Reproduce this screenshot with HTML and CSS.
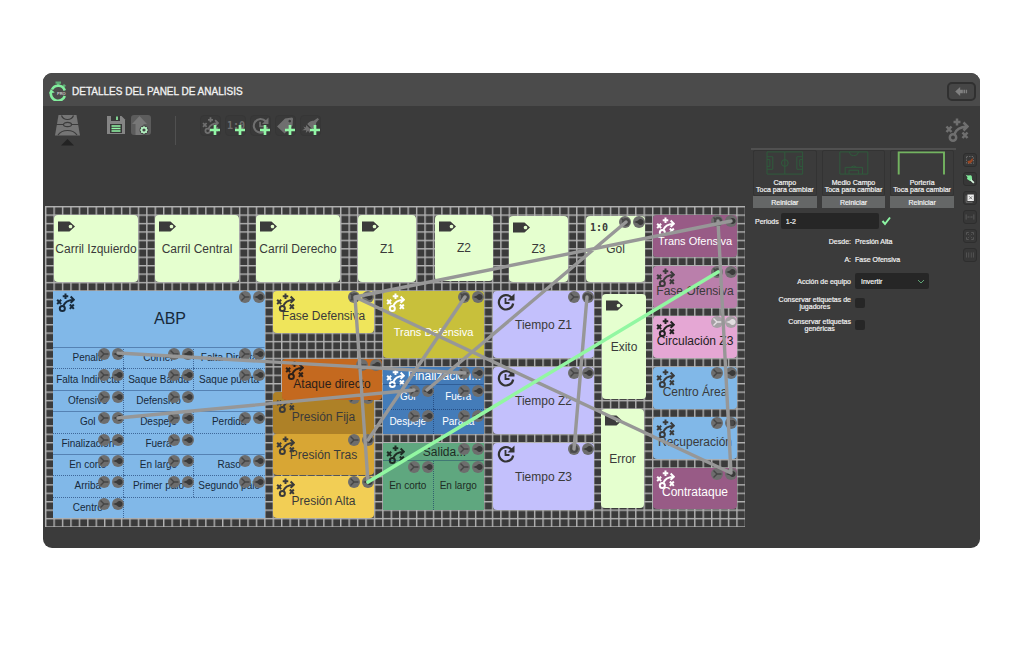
FILE: index.html
```html
<!DOCTYPE html>
<html lang="es">
<head>
<meta charset="utf-8">
<meta name="viewport" content="width=device-width, initial-scale=1">
<title>Detalles del panel de analisis</title>
<link rel="stylesheet" href="styles.css">
</head>
<body>
<svg class="defs" aria-hidden="true">
  <symbol id="tactic" viewBox="0 0 24 24">
    <g fill="none" stroke="currentColor" stroke-width="2.500">
      <path d="M1.500 8.500l5 5.500M6.500 8.500l-5 5.500M8.500 4h7M12 .5v7M17.500 14.500l5 5.500M22.500 14.500l-5 5.500"/>
      <circle cx="8" cy="19.500" r="3.200"/>
      <path d="M9.500 16C11 11.500 15 9 22 8.500M18.500 4.500l4 4-4 4"/>
    </g>
  </symbol>
  <symbol id="tag" viewBox="0 0 17 11">
    <path fill="currentColor" fill-rule="evenodd" d="M0 .5h11.500L17 5.500l-5.500 5H0zM12.500 3.700a1.800 1.800 0 1 0 .01 0z"/>
  </symbol>
  <symbol id="clock" viewBox="0 0 18 18">
    <path d="M14.500 4.500A7.200 7.200 0 1 0 16.200 10.500" fill="none" stroke="currentColor" stroke-width="2.200"/>
    <path d="M17.500 .5v7h-7z" fill="currentColor"/>
    <path d="M8.500 5v5h4" fill="none" stroke="currentColor" stroke-width="1.800"/>
  </symbol>
  <symbol id="plus" viewBox="0 0 9 9"><path d="M4.500 0v9M0 4.500h9" stroke="#92f7a6" stroke-width="2.400"/></symbol>
  <symbol id="ports" viewBox="0 0 26 12">
    <circle cx="6" cy="6" r="6" fill="#6d6d6d"/>
    <path d="M2.500 2.500L6 6l-3.500 3.500M6 6h4.500" fill="none" stroke="#454545" stroke-width="1.400"/>
    <circle cx="20" cy="6" r="6" fill="#6d6d6d"/>
    <path d="M15 6l4-1.500a3 3 0 1 1 0 3z" fill="#3a3a3a"/>
  </symbol>
  <symbol id="ports-lit" viewBox="0 0 26 12">
    <circle cx="6" cy="6" r="6" fill="#a5a0a4"/>
    <path d="M2.500 2.500L6 6l-3.500 3.500M6 6h4.500" fill="none" stroke="#e6e0e4" stroke-width="1.400"/>
    <circle cx="20" cy="6" r="6" fill="#a5a0a4"/>
    <path d="M15 6l4-1.500a3 3 0 1 1 0 3z" fill="#e2dde0"/>
  </symbol>
</svg>

<main class="panel">
  <header class="titlebar">
    <svg class="logo" viewBox="0 0 18 20" aria-hidden="true">
      <path d="M6.500 .5h5.500v2.200h-1.500v2h-2.500v-2H6.500zM15 3l2 1.800-1.400 1.400-2-1.800z" fill="#5fae76"/>
      <path d="M3 8.500A7 7 0 0 1 15.800 9.500M15.800 15A7.200 7.200 0 0 1 2 11" fill="none" stroke="#82ee9d" stroke-width="2.600"/>
      <path d="M0 12.500L1.800 8l3.900 3.500z" fill="#82ee9d"/>
      <text x="8" y="14" class="logo-text">PRO</text>
    </svg>
    <h1 class="title">DETALLES DEL PANEL DE ANALISIS</h1>
    <button class="back" aria-label="Volver">
      <svg viewBox="0 0 14 10" aria-hidden="true"><path d="M0 5l5.500-5v3h3v4h-3v3zM9.200 3h1.800v4H9.200zM11.800 3h1.400v4h-1.400z" fill="#808080"/></svg>
    </button>
  </header>

  <nav class="toolbar" aria-label="Herramientas">
    <button class="tool tool-field" aria-label="Campo">
      <svg viewBox="0 0 25 31" aria-hidden="true">
        <path d="M3.500 0h18L25 20.500H0z" fill="#757575"/>
        <path d="M6.500 .5Q8 4.500 12.500 4.500t6-4M1 9.500h7.500M16.500 9.500H24M3 20q3-4.500 9.500-4.500T22 20" fill="none" stroke="#3b3b3b" stroke-width="1.200"/>
        <ellipse cx="12.500" cy="9.500" rx="4" ry="2.200" fill="none" stroke="#3b3b3b" stroke-width="1.200"/>
        <path d="M6 30.500l6.500-6.500 6.500 6.500z" fill="#232323"/>
      </svg>
    </button>
    <button class="tool" aria-label="Guardar">
      <svg viewBox="0 0 20 20" aria-hidden="true">
        <path d="M1 1h14.500L19 4.500V19H1z" fill="#858585"/><path d="M5 1h9v5H5zM4 9h12v9H4z" fill="#373737"/>
        <path d="M11 1.500v3.500M5.500 11h9M5.500 13.500h9M5.500 16h9" stroke="#92f7a6" stroke-width="1.600"/>
      </svg>
    </button>
    <button class="tool" aria-label="Exportar">
      <svg viewBox="0 0 20 20" aria-hidden="true">
        <rect width="20" height="20" rx="3" fill="#5c5c5c"/><path d="M8.500 1L16 9h-3.500v11h-8V9H1z" fill="#777"/>
        <circle cx="13" cy="15" r="4.500" fill="#454545"/><circle cx="13" cy="15" r="2.400" fill="none" stroke="#b4f3c2" stroke-width="1.600"/>
        <path d="M13 11v1.500M13 17.500V19M9 15h1.500M15.500 15H17M10.200 12.200l1 1M14.800 16.800l1 1M15.800 12.200l-1 1M11.200 16.800l-1 1" stroke="#b4f3c2"/>
      </svg>
    </button>
    <span class="divider"></span>
    <span class="adders">
      <button class="add" aria-label="Añadir equipo"><svg class="glyph" aria-hidden="true"><use href="#tactic"/></svg><svg class="plus" aria-hidden="true"><use href="#plus"/></svg></button>
      <button class="add" aria-label="Añadir marcador"><span class="score">1:0</span><svg class="plus" aria-hidden="true"><use href="#plus"/></svg></button>
      <button class="add" aria-label="Añadir tiempo"><svg class="glyph" aria-hidden="true"><use href="#clock"/></svg><svg class="plus" aria-hidden="true"><use href="#plus"/></svg></button>
      <button class="add" aria-label="Añadir etiqueta"><svg class="glyph" viewBox="0 0 18 18" aria-hidden="true"><path fill="currentColor" fill-rule="evenodd" d="M0 10L8.500 1.500 16 .5l1 1-.5 7.500L8 17.500zM13.500 3a1.400 1.400 0 1 0 .01 0z"/></svg><svg class="plus" aria-hidden="true"><use href="#plus"/></svg></button>
      <button class="add" aria-label="Añadir conexión"><svg class="glyph" viewBox="0 0 18 18" aria-hidden="true"><path fill="currentColor" d="M16.500 1l1.500 1.500-3 3.500q.5 3-2 5l-2 2-5.500-5.500 2-2q2-2 5-1.500zM4.500 8.500l5.500 5.500-2 3-1.500-2.500L4 17l.5-3L0 14l3-1.500L1.500 10l2.500 1z"/></svg><svg class="plus" aria-hidden="true"><use href="#plus"/></svg></button>
    </span>
    <svg class="mode" aria-hidden="true"><use href="#tactic"/></svg>
  </nav>

  <div class="content">
    <section class="board" aria-label="Panel">
      <svg class="layer" viewBox="0 0 701 321" preserveAspectRatio="none" aria-hidden="true">
        <defs><pattern id="grid" width="8.430" height="8.430" patternUnits="userSpaceOnUse"><path d="M.7 0v8.430M0 .7h8.430" stroke="#b2b2b2" stroke-width="1.400"/></pattern></defs>
        <rect width="700" height="321.500" fill="url(#grid)"/>
      </svg>

      <div class="node lime" style="--x:9;--y:9;--w:84;--h:67"><svg class="icon tag"><use href="#tag"/></svg><span>Carril Izquierdo</span></div>
      <div class="node lime" style="--x:110;--y:9;--w:84;--h:67"><svg class="icon tag"><use href="#tag"/></svg><span>Carril Central</span></div>
      <div class="node lime" style="--x:211;--y:9;--w:84;--h:67"><svg class="icon tag"><use href="#tag"/></svg><span>Carril Derecho</span></div>
      <div class="node lime" style="--x:313;--y:9;--w:58;--h:67"><svg class="icon tag"><use href="#tag"/></svg><span>Z1</span></div>
      <div class="node lime" style="--x:390;--y:9;--w:58;--h:66"><svg class="icon tag"><use href="#tag"/></svg><span>Z2</span></div>
      <div class="node lime" style="--x:464;--y:10;--w:59;--h:66"><svg class="icon tag"><use href="#tag"/></svg><span>Z3</span></div>
      <div class="node lime" style="--x:541;--y:10;--w:59;--h:66"><span class="icon goal">1:0</span><span>Gol</span><svg class="ports"><use href="#ports"/></svg></div>

      <div class="node group blue" style="--x:8;--y:85;--w:212;--h:227">
        <div class="group-head big"><svg class="icon tactic"><use href="#tactic"/></svg><span>ABP</span><svg class="ports"><use href="#ports"/></svg></div>
        <div class="cells three">
          <div class="cell">Penalti<svg class="ports"><use href="#ports"/></svg></div>
          <div class="cell">Corner<svg class="ports"><use href="#ports"/></svg></div>
          <div class="cell">Falta Directa<svg class="ports"><use href="#ports"/></svg></div>
          <div class="cell dotted">Falta Indirecta<svg class="ports"><use href="#ports"/></svg></div>
          <div class="cell dotted">Saque Banda<svg class="ports"><use href="#ports"/></svg></div>
          <div class="cell dotted">Saque puerta<svg class="ports"><use href="#ports"/></svg></div>
          <div class="cell">Ofensivo<svg class="ports"><use href="#ports"/></svg></div>
          <div class="cell open">Defensivo<svg class="ports"><use href="#ports"/></svg></div>
          <div class="cell"></div>
          <div class="cell">Gol<svg class="ports"><use href="#ports"/></svg></div>
          <div class="cell">Despeje<svg class="ports"><use href="#ports"/></svg></div>
          <div class="cell">Perdida<svg class="ports"><use href="#ports"/></svg></div>
          <div class="cell dotted">Finalización<svg class="ports"><use href="#ports"/></svg></div>
          <div class="cell dotted open">Fuera<svg class="ports"><use href="#ports"/></svg></div>
          <div class="cell dotted"></div>
          <div class="cell">En corto<svg class="ports"><use href="#ports"/></svg></div>
          <div class="cell">En largo<svg class="ports"><use href="#ports"/></svg></div>
          <div class="cell">Raso<svg class="ports"><use href="#ports"/></svg></div>
          <div class="cell dotted">Arriba<svg class="ports"><use href="#ports"/></svg></div>
          <div class="cell dotted">Primer palo<svg class="ports"><use href="#ports"/></svg></div>
          <div class="cell dotted">Segundo palo<svg class="ports"><use href="#ports"/></svg></div>
          <div class="cell dotted">Centro<svg class="ports"><use href="#ports"/></svg></div>
          <div class="cell dotted open"></div>
          <div class="cell dotted"></div>
        </div>
      </div>

      <div class="node team yellow" style="--x:228;--y:85;--w:101;--h:42"><svg class="icon tactic"><use href="#tactic"/></svg><span>Fase Defensiva</span><svg class="ports"><use href="#ports"/></svg></div>
      <div class="node team small olive" style="--x:338;--y:85;--w:101;--h:67"><svg class="icon tactic"><use href="#tactic"/></svg><span>Trans Defensiva</span><svg class="ports"><use href="#ports"/></svg></div>
      <div class="node team ochre" style="--x:228;--y:186;--w:101;--h:42"><svg class="icon tactic"><use href="#tactic"/></svg><span>Presión Fija</span><svg class="ports"><use href="#ports"/></svg></div>
      <div class="node amber" style="--x:228;--y:228;--w:101;--h:41"><svg class="icon tactic"><use href="#tactic"/></svg><span>Presión Tras</span><svg class="ports"><use href="#ports"/></svg></div>
      <div class="node team gold" style="--x:228;--y:270;--w:101;--h:42"><svg class="icon tactic"><use href="#tactic"/></svg><span>Presión Alta</span><svg class="ports"><use href="#ports"/></svg></div>
      <div class="node team orange" style="--x:237;--y:153;--w:100;--h:41"><svg class="icon tactic"><use href="#tactic"/></svg><span>Ataque directo</span><svg class="ports"><use href="#ports"/></svg></div>

      <div class="node group royal" style="--x:338;--y:161;--w:101;--h:67">
        <div class="group-head"><svg class="icon tactic"><use href="#tactic"/></svg><span>Finalización...</span><svg class="ports"><use href="#ports"/></svg></div>
        <div class="cells">
          <div class="cell">Gol<svg class="ports"><use href="#ports"/></svg></div>
          <div class="cell">Fuera<svg class="ports"><use href="#ports"/></svg></div>
          <div class="cell dotted">Despeje<svg class="ports"><use href="#ports"/></svg></div>
          <div class="cell dotted">Parada<svg class="ports"><use href="#ports"/></svg></div>
        </div>
      </div>
      <div class="node group green" style="--x:338;--y:237;--w:101;--h:67">
        <div class="group-head"><svg class="icon tactic"><use href="#tactic"/></svg><span>Salida...</span><svg class="ports"><use href="#ports"/></svg></div>
        <div class="cells">
          <div class="cell">En corto<svg class="ports"><use href="#ports"/></svg></div>
          <div class="cell">En largo<svg class="ports"><use href="#ports"/></svg></div>
        </div>
      </div>

      <div class="node lilac" style="--x:448;--y:85;--w:101;--h:67"><svg class="icon clock"><use href="#clock"/></svg><span>Tiempo Z1</span><svg class="ports"><use href="#ports"/></svg></div>
      <div class="node lilac" style="--x:448;--y:161;--w:101;--h:67"><svg class="icon clock"><use href="#clock"/></svg><span>Tiempo Z2</span><svg class="ports"><use href="#ports"/></svg></div>
      <div class="node lilac" style="--x:448;--y:237;--w:101;--h:67"><svg class="icon clock"><use href="#clock"/></svg><span>Tiempo Z3</span><svg class="ports"><use href="#ports"/></svg></div>
      <div class="node lime" style="--x:557;--y:88;--w:44;--h:105"><svg class="icon tag"><use href="#tag"/></svg><span>Exito</span></div>
      <div class="node lime" style="--x:556;--y:203;--w:43;--h:99"><svg class="icon tag"><use href="#tag"/></svg><span>Error</span></div>

      <div class="node team small plum" style="--x:608;--y:9;--w:84;--h:42"><svg class="icon tactic"><use href="#tactic"/></svg><span>Trans Ofensiva</span><svg class="ports"><use href="#ports"/></svg></div>
      <div class="node team mauve" style="--x:608;--y:60;--w:84;--h:42"><svg class="icon tactic"><use href="#tactic"/></svg><span>Fase Ofensiva</span><svg class="ports"><use href="#ports"/></svg></div>
      <div class="node team pink" style="--x:608;--y:110;--w:84;--h:42"><svg class="icon tactic"><use href="#tactic"/></svg><span>Circulación Z3</span><svg class="ports"><use href="#ports-lit"/></svg></div>
      <div class="node team sky" style="--x:608;--y:161;--w:84;--h:42"><svg class="icon tactic"><use href="#tactic"/></svg><span>Centro Área</span><svg class="ports"><use href="#ports"/></svg></div>
      <div class="node team sky" style="--x:608;--y:211;--w:84;--h:42"><svg class="icon tactic"><use href="#tactic"/></svg><span>Recuperación</span><svg class="ports"><use href="#ports"/></svg></div>
      <div class="node team plum" style="--x:608;--y:262;--w:84;--h:41"><svg class="icon tactic"><use href="#tactic"/></svg><span>Contrataque</span><svg class="ports"><use href="#ports"/></svg></div>

      <svg class="layer" viewBox="0 0 701 321" preserveAspectRatio="none" aria-hidden="true">
        <g fill="#4a4a4a">
          <circle cx="310" cy="91" r="4"/><circle cx="420" cy="91" r="4"/><circle cx="542" cy="91" r="4"/><circle cx="529" cy="243" r="4"/>
          <circle cx="581" cy="16" r="4"/><circle cx="673" cy="15" r="4"/><circle cx="673" cy="66" r="4"/><circle cx="686" cy="217" r="3"/>
        </g>
        <g fill="none" stroke="#979797" stroke-width="3.400" stroke-linecap="round">
          <path d="M73 147L420 167M73 212L369 184M310 91L686 15M310 91L686 267M310 91L323 276M420 91L323 234M581 16L382 184M542 91L529 243M673 15L686 267"/>
        </g>
        <path d="M323 276L673 66" fill="none" stroke="#92f7a2" stroke-width="3.600" stroke-linecap="round"/>
      </svg>
    </section>

    <aside class="side" aria-label="Propiedades">
      <div class="pitches">
        <div class="pitch">
          <button class="pitch-pick">
            <svg viewBox="0 0 64 24" aria-hidden="true"><g fill="none" stroke="#2f5c3c"><path d="M13.500 .5v23h37V.5zM32 .5v23M13.500 5.500h6v13h-6M50.500 5.500h-6v13h6M13.500 8.500h3v7h-3M50.500 8.500h-3v7h3"/><circle cx="32" cy="12" r="3.500"/></g></svg>
            <span>Campo<br>Toca para cambiar</span>
          </button>
          <button class="reset">Reiniciar</button>
        </div>
        <div class="pitch">
          <button class="pitch-pick">
            <svg viewBox="0 0 64 24" aria-hidden="true"><g fill="none" stroke="#2f5c3c"><path d="M17.500 .5v23h29V.5zM23 23.500v-7h18v7M27 23.500v-4h10v4M27 .5q1 4 5 4t5-4M29 16.500q3-3 6 0"/></g></svg>
            <span>Medio Campo<br>Toca para cambiar</span>
          </button>
          <button class="reset">Reiniciar</button>
        </div>
        <div class="pitch">
          <button class="pitch-pick">
            <svg viewBox="0 0 64 24" aria-hidden="true"><path d="M8 24V1h47v23" fill="none" stroke="#73b360" stroke-width="2"/></svg>
            <span>Portería<br>Toca para cambiar</span>
          </button>
          <button class="reset">Reiniciar</button>
        </div>
      </div>

      <form class="props">
        <div class="periods">
          <label for="periods">Periods</label>
          <input id="periods" type="text" value="1-2">
          <button class="confirm" type="button" aria-label="Aceptar"><svg viewBox="0 0 10 10" aria-hidden="true"><path d="M1.500 5l2.500 3 5-6.500" fill="none" stroke="#8df5a4" stroke-width="2"/></svg></button>
        </div>
        <div class="row"><span>Desde:</span><span>Presión Alta</span></div>
        <div class="row"><span>A:</span><span>Fase Ofensiva</span></div>
        <div class="options">
          <div class="row tall">
            <label for="action">Acción de equipo</label>
            <span class="select"><select id="action"><option>Invertir</option></select><svg viewBox="0 0 8 5" aria-hidden="true"><path d="M1 1l3 3 3-3" fill="none" stroke="#5fa576"/></svg></span>
          </div>
          <div class="row tall"><label for="keep-players">Conservar etiquetas de<br>jugadores</label><input id="keep-players" type="checkbox"></div>
          <div class="row tall"><label for="keep-generic">Conservar etiquetas<br>genéricas</label><input id="keep-generic" type="checkbox"></div>
        </div>
      </form>
    </aside>

    <div class="rail">
      <button aria-label="Mover"><svg viewBox="0 0 14 14"><path d="M3 3h8v8H3z" fill="none" stroke="#7b7b7b" stroke-dasharray="1.500 1.500"/><path d="M4 8.500l2-1 1 .5 2.500-3 1 .5-.5 3-2.500 2.500-2.500 0z" fill="#9c4723"/></svg></button>
      <button aria-label="Conectar"><svg viewBox="0 0 14 14"><path d="M2 2l2.500 1 3.500-.5 1 1L9.500 7 9 9.500l-2.500-.5L3.500 7 4 5z" fill="#82e99b"/><path d="M8 8l3.500 3.500" stroke="#d8f5df" stroke-width="2"/></svg></button>
      <button aria-label="Eliminar"><svg viewBox="0 0 14 14"><path d="M2.500 4v8H10" fill="none" stroke="#777"/><path d="M4 3h7.500v7.500H4z" fill="#ececec"/><path d="M6 5l3.500 3.500M9.500 5L6 8.500" stroke="#666"/></svg></button>
      <button aria-label="Ajustar ancho"><svg viewBox="0 0 14 14"><path d="M2.500 4v6M11.500 4v6M4 7h2.500M7.500 7H10" fill="none" stroke="#606060"/></svg></button>
      <button aria-label="Ajustar tamaño"><svg viewBox="0 0 14 14"><path d="M3 5.500V3h2.500M8.500 3H11v2.500M11 8.500V11H8.500M5.500 11H3V8.500M5 5l1 1M9 5L8 6M5 9l1-1M9 9L8 8" fill="none" stroke="#606060"/></svg></button>
      <button aria-label="Distribuir"><svg viewBox="0 0 14 14"><path d="M3 4v6M5.500 4v6M8.500 4v6M11 4v6" fill="none" stroke="#585858"/></svg></button>
    </div>
  </div>
</main>
</body>
</html>
```
FILE: styles.css
```css
* { box-sizing: border-box; }

body {
  margin: 0;
  padding: 73px 44px 100px 43px;
  background: #fff;
  color: #f2f2f2;
  font-family: "Liberation Sans", Arial, sans-serif;
  font-size: 12px;
}

button, input, select { margin: 0; padding: 0; border: 0; font: inherit; color: inherit; }
button { background: none; cursor: pointer; }
svg { display: block; }
.defs { position: absolute; width: 0; height: 0; }

.panel { border-radius: 9px; background: #3b3b3b; overflow: hidden; }

/* Title bar */
.titlebar { display: flex; align-items: center; gap: 5px; height: 33px; padding: 3px 4px 0 6px; background: #4b4b4b; }
.logo { width: 18px; height: 20px; }
.logo-text { font-size: 4px; font-weight: 700; fill: #c8c8c8; }
.title { flex: 1; margin: 0; font-size: 10px; font-weight: 400; -webkit-text-stroke: 0.3px; }
.back { display: grid; place-items: center; width: 29px; height: 19px; border: 2px solid #303030; border-radius: 5px; background: #464646; }
.back svg { width: 13px; height: 9px; }

/* Toolbar */
.toolbar { display: flex; align-items: flex-start; height: 42px; padding: 9px 11px 0 12px; color: #6f6f6f; }
.tool { width: 20px; height: 20px; margin-right: 5px; }
.tool svg { width: 100%; height: 100%; }
.tool-field { width: 25px; height: 31px; margin-right: 26px; }
.divider { width: 1px; height: 29px; margin: 1px 24px 0 19px; background: #505050; }
.adders { display: flex; flex: 1; gap: 4px; }
.add { position: relative; width: 21px; height: 21px; padding: 1px; border-radius: 4px; border: 1px solid #363636; background: #393939; }
.glyph { width: 17px; height: 17px; }
.score { display: block; font: 700 10px/14px "DejaVu Sans Mono", monospace; }
.plus { position: absolute; right: 0; bottom: 0; width: 10px; height: 10px; }
.mode { width: 24px; height: 24px; margin-top: 3px; }

/* Content */
.content { display: flex; align-items: flex-start; padding: 0 3px 21px 2px; }
.board { position: relative; flex: 1; min-width: 0; aspect-ratio: 701 / 321; margin-top: 58px; color: #3a3a3a; }
.layer { position: absolute; inset: 0; width: 100%; height: 100%; }

.node {
  position: absolute;
  left: calc(var(--x) / 701 * 100%);
  top: calc(var(--y) / 321 * 100%);
  width: calc(var(--w) / 701 * 100%);
  height: calc(var(--h) / 321 * 100%);
  display: flex;
  align-items: center;
  justify-content: center;
  border-radius: 4px;
  font-size: 12px;
  line-height: 14px;
  white-space: nowrap;
}
.team { padding-top: 8px; }
.small { font-size: 11px; padding-top: 10px; }
.olive { padding-top: 14px; }

.icon { position: absolute; top: 2px; left: 4px; }
.tag { top: 6px; width: 17px; height: 11px; color: #3b3b3b; }
.tactic { left: 3px; width: 19px; height: 19px; }
.clock { width: 18px; height: 18px; color: #333; }
.goal { top: 5px; font: 700 10px/14px "DejaVu Sans Mono", monospace; }
.ports { position: absolute; top: 0; right: 0; width: 26px; height: 12px; }

.lime { background: #e5ffcf; }
.blue { background: #81b8e8; color: #17293a; }
.sky { background: #81b8e8; }
.yellow { background: #efe55b; }
.olive { background: #c8c03b; color: #fff; }
.ochre { background: #ae8127; }
.amber { background: #d8a634; }
.gold { background: #f2ce55; }
.orange { background: #c4691f; color: #2c2019; }
.royal { background: #447cb9; color: #fff; }
.green { background: #5fa77f; color: #1e2c24; }
.lilac { background: #c3c0fc; }
.plum { background: #985b86; color: #fff; }
.mauve { background: #ba7fab; }
.pink { background: #e5a7d4; color: #222; }

.group { flex-direction: column; align-items: stretch; justify-content: flex-start; border-radius: 0; }
.group-head { position: relative; display: flex; align-items: center; justify-content: center; height: 17px; padding-left: 22px; }
.group-head.big { height: 56px; font-size: 16px; }
.cells { display: grid; flex: 1; grid-template-columns: 1fr 1fr; grid-auto-rows: 1fr; font-size: 10px; line-height: 12px; }
.three { grid-template-columns: repeat(3, 1fr); }
.cell { position: relative; display: flex; align-items: center; justify-content: center; border-top: 1px solid rgba(20, 50, 100, 0.4); border-right: 1px dotted rgba(20, 50, 100, 0.6); }
.cell.dotted { border-top-style: dotted; border-top-color: rgba(20, 50, 100, 0.6); }
.cell.open, .cells:not(.three) .cell:nth-child(2n), .three .cell:nth-child(3n) { border-right-color: transparent; }
.cell .ports { right: -1px; }

/* Properties */
.side { width: 205px; margin-left: 5px; padding: 0 2px 0 2px; border-top: 2px solid #505050; font-size: 7px; line-height: 7px; -webkit-text-stroke: 0.2px; }
.pitches { display: grid; grid-template-columns: repeat(3, 1fr); gap: 5px; }
.pitch { display: flex; flex-direction: column; }
.pitch-pick { display: flex; flex-direction: column; align-items: center; gap: 4px; height: 46px; border: 1px solid #333; border-radius: 2px; text-align: center; white-space: nowrap; }
.pitch-pick svg { width: 100%; height: 24px; }
.reset { height: 12px; background: #656767; }

.props { padding-top: 5px; }
.periods { display: flex; align-items: center; gap: 2px; height: 16px; padding-left: 2px; margin-bottom: 3px; }
.periods input { width: 98px; height: 16px; padding: 0 5px; border-radius: 2px; background: #262626; }
.confirm { width: 10px; height: 10px; }
.row { display: grid; grid-template-columns: 98px 1fr; gap: 4px; align-items: center; height: 18px; }
.row > :first-child { text-align: right; }
.row > label { justify-self: end; }
.row.tall { height: 22px; }
.row.tall > label { text-align: center; }
.options { padding-top: 2px; }
.select { position: relative; width: 74px; }
.select select { width: 100%; height: 16px; padding: 0 6px; border-radius: 2px; background: #262626; appearance: none; }
.select svg { position: absolute; top: 6px; right: 4px; width: 8px; height: 5px; }
.row input { width: 10px; height: 10px; border-radius: 2px; background: #262626; appearance: none; }

.rail { display: flex; flex-direction: column; gap: 5px; width: 14px; margin: 5px 0 0 7px; }
.rail button { width: 14px; height: 14px; border: 1px solid #2e2e2e; border-radius: 3px; background: #373737; }
.rail svg { width: 12px; height: 12px; }
```
